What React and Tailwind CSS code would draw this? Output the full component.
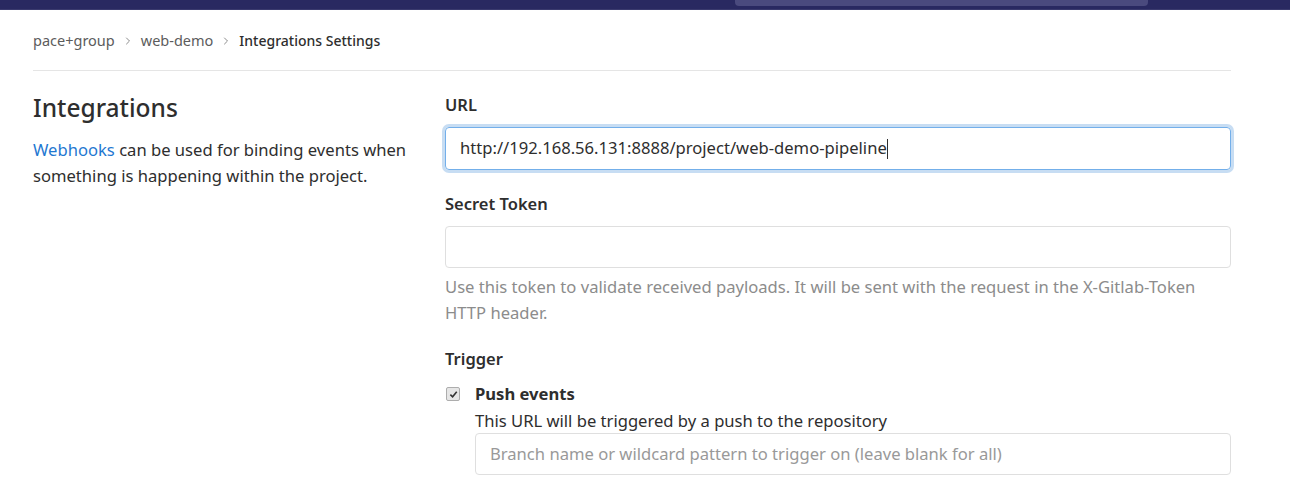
import { ChevronRight } from 'lucide-react'

const font = { fontFamily: '"Noto Sans", "Open Sans", sans-serif' }

const Field = ({ label, children }) => (
  <div className="flex flex-col">
    <label className="text-[16.5px] font-semibold text-[#2e2e2e] leading-[20px] mb-[12px]">{label}</label>
    {children}
  </div>
)

const App = () => {
  return (
    <div className="min-h-screen bg-white text-[#2e2e2e]" style={font}>
      <div className="h-[10px] bg-[#292961] border-b border-[#3a3a6e] flex">
        <div className="ml-[735px] w-[413px] h-[6px] bg-[#4a4a7e] rounded-b-[4px]" />
      </div>

      <div className="px-[33px] w-[1231px] box-content">
        <div className="w-[1198px]">
          <nav className="h-[61px] flex items-center gap-[5px] text-[14.5px] border-b border-[#e5e5e5] pt-[1px]">
            <span className="text-[#5c5c5c]">pace+group</span>
            <ChevronRight size={12} className="text-[#8c8c8c] mx-[2px]" />
            <span className="text-[#5c5c5c]">web-demo</span>
            <ChevronRight size={12} className="text-[#8c8c8c] mx-[2px]" />
            <span className="font-medium text-[14px] text-[#2e2e2e]">Integrations Settings</span>
          </nav>

          <div className="flex">
            <div className="w-[412px] pr-[4px] pt-[21px]">
              <h4 className="text-[24.5px] font-medium leading-[32px] text-[#2e2e2e] mb-[13px]">Integrations</h4>
              <p className="text-[16.6px] leading-[26px] text-[#2e2e2e]">
                <a className="text-[#1f78d1]">Webhooks</a> can be used for binding events when something is happening within the project.
              </p>
            </div>

            <div className="flex-1 flex flex-col pt-[24px]">
              <Field label="URL">
                <div className="h-[43px] border border-[#73afea] rounded-[4px] shadow-[0_0_0_3px_rgba(31,120,209,0.25)] flex items-center px-[14px] text-[16.6px] text-[#2e2e2e]">
                  <span>http://192.168.56.131:8888/project/web-demo-pipeline</span>
                  <span className="w-px h-[20px] bg-[#2e2e2e]" />
                </div>
              </Field>

              <div className="mt-[24px]">
                <Field label="Secret Token">
                  <div className="h-[42px] border border-[#dfdfdf] rounded-[4px]" />
                </Field>
                <p className="mt-[6px] text-[16.6px] leading-[26px] text-[#8c8c8c] pr-[30px]">
                  Use this token to validate received payloads. It will be sent with the request in the X-Gitlab-Token HTTP header.
                </p>
              </div>

              <div className="mt-[23px]">
                <div className="text-[16.5px] font-semibold leading-[20px] mb-[14px]">Trigger</div>
                <div className="flex">
                  <div className="w-[30px] pt-[4px]">
                    <div className="w-[14px] h-[14px] rounded-[2px] border border-[#adadad] bg-[#e6e6e6] flex items-center justify-center ml-[1px]">
                      <svg viewBox="0 0 10 10" className="w-[9px] h-[9px]">
                        <path d="M1.5 5.2 L4 7.6 L8.6 2" fill="none" stroke="#333" strokeWidth="1.8" />
                      </svg>
                    </div>
                  </div>
                  <div className="flex-1 flex flex-col">
                    <span className="text-[16.6px] font-bold leading-[22px]">Push events</span>
                    <span className="text-[16.6px] leading-[24px] mt-[4px]">This URL will be triggered by a push to the repository</span>
                    <div className="h-[42px] border border-[#dfdfdf] rounded-[4px] flex items-center px-[14px] text-[16.6px] text-[#999]">
                      Branch name or wildcard pattern to trigger on (leave blank for all)
                    </div>
                  </div>
                </div>
              </div>
            </div>
          </div>
        </div>
      </div>
    </div>
  )
}

export default App
